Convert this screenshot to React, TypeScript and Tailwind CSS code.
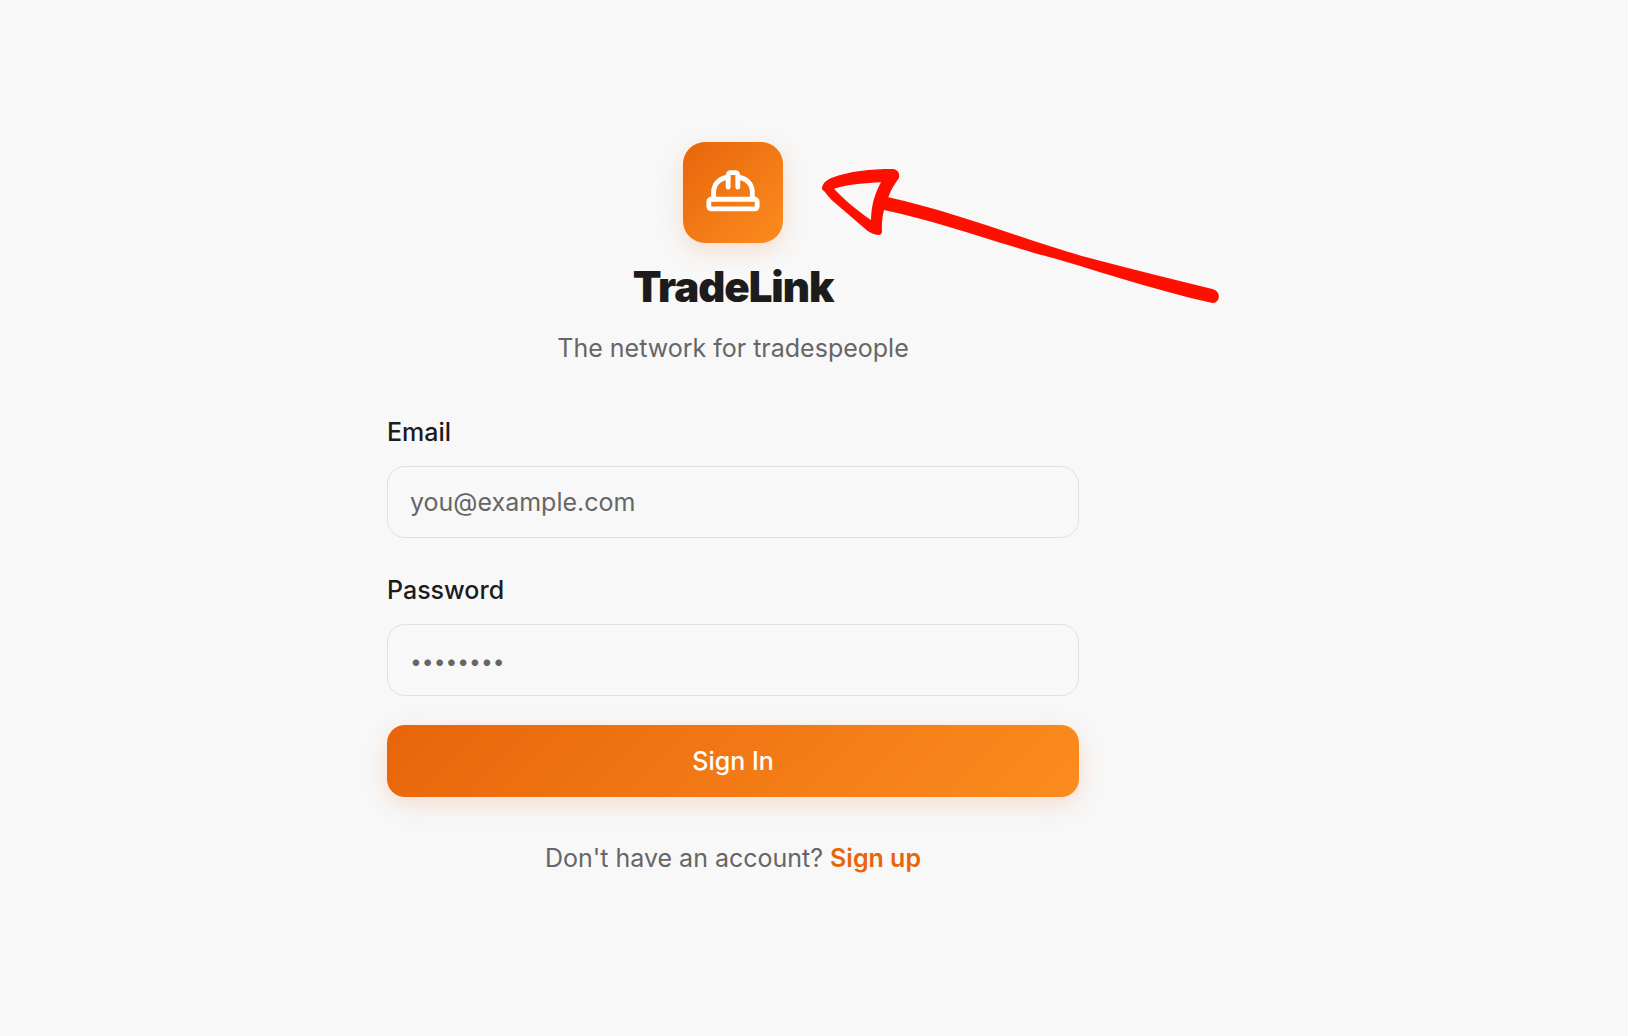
import type { InputHTMLAttributes } from "react";
import { HardHat } from "lucide-react";

type FieldProps = InputHTMLAttributes<HTMLInputElement> & {
  id: string;
  label: string;
};

function Field({ id, label, ...props }: FieldProps) {
  return (
    <div className="flex flex-col gap-[21px]">
      <label htmlFor={id} className="text-[25px] leading-[26px] font-medium">
        {label}
      </label>
      <input
        id={id}
        name={id}
        className="h-[72px] w-full rounded-[18px] border border-[#e0e0e0] bg-transparent px-[22px] text-[25px] placeholder:text-[#666666] placeholder:opacity-100 focus:border-[#e8650a] focus:outline-none [&[type=password]]:placeholder:text-[21px]"
        {...props}
      />
    </div>
  );
}

function LogoArrow() {
  return (
    <svg
      aria-hidden="true"
      viewBox="0 0 1290 510"
      className="pointer-events-none absolute top-2 left-full ml-[17px] h-[170px] w-[430px] max-w-none"
      fill="#ff0f00"
      fillRule="evenodd"
    >
      <path d="M66 113 C69 99 80 90 94 84 C150 63 210 57 278 57 C292 57 300 69 297 83 C286 101 274 114 265 142 C480 190 660 265 860 322 C980 354 1110 386 1240 418 C1264 426 1261 458 1237 459 C1040 415 860 350 700 308 C550 264 400 211 252 180 C246 204 245 225 246 246 Q245 254 238 255 C225 255 213 250 203 243 L94 149 C81 137 78 127 66 118 Z M102 116 C128 145 176 185 213 210 C214 167 223 134 243 97 C195 99 150 103 102 116 Z" />
    </svg>
  );
}

export default function App() {
  return (
    <main className="flex min-h-screen justify-center bg-[#f8f8f8] px-6 pt-[142px] pb-12 font-['Inter',sans-serif] text-[#1c1c1c] lg:pr-[186px]">
      <div className="w-full max-w-[692px]">
        {/* Brand */}
        <header className="mb-[53px] flex flex-col items-center">
          <div className="relative">
            <div className="flex h-[101px] w-[100px] items-center justify-center rounded-[22px] bg-linear-135 from-[#e8650a] to-[#fb8c1e] pb-[2px] shadow-[0_7px_25px_rgba(232,101,10,0.18)]">
              <HardHat size={58} className="text-white" />
            </div>
            <LogoArrow />
          </div>
          <h1 className="mt-[19px] text-[42px] leading-[50px] font-black tracking-tight">
            TradeLink
          </h1>
          <p className="mt-[18px] text-[25px] leading-9 text-[#666666]">
            The network for tradespeople
          </p>
        </header>

        {/* Sign in form */}
        <form onSubmit={(e) => e.preventDefault()}>
          <div className="flex flex-col gap-[39px]">
            <Field
              id="email"
              label="Email"
              type="email"
              placeholder="you@example.com"
            />
            <Field
              id="password"
              label="Password"
              type="password"
              placeholder="••••••••"
            />
          </div>

          <button
            type="submit"
            className="mt-[29px] h-[72px] w-full rounded-[18px] bg-linear-135 from-[#e8650a] to-[#fb8c1e] pt-[2px] text-[25px] font-medium text-white shadow-[0_7px_25px_rgba(232,101,10,0.18)]"
          >
            Sign In
          </button>
        </form>

        <p className="mt-[43px] text-center text-[25px] leading-9 text-[#666666]">
          Don&apos;t have an account?{" "}
          <a href="#signup" className="font-semibold text-[#e8650a]">
            Sign up
          </a>
        </p>
      </div>
    </main>
  );
}
